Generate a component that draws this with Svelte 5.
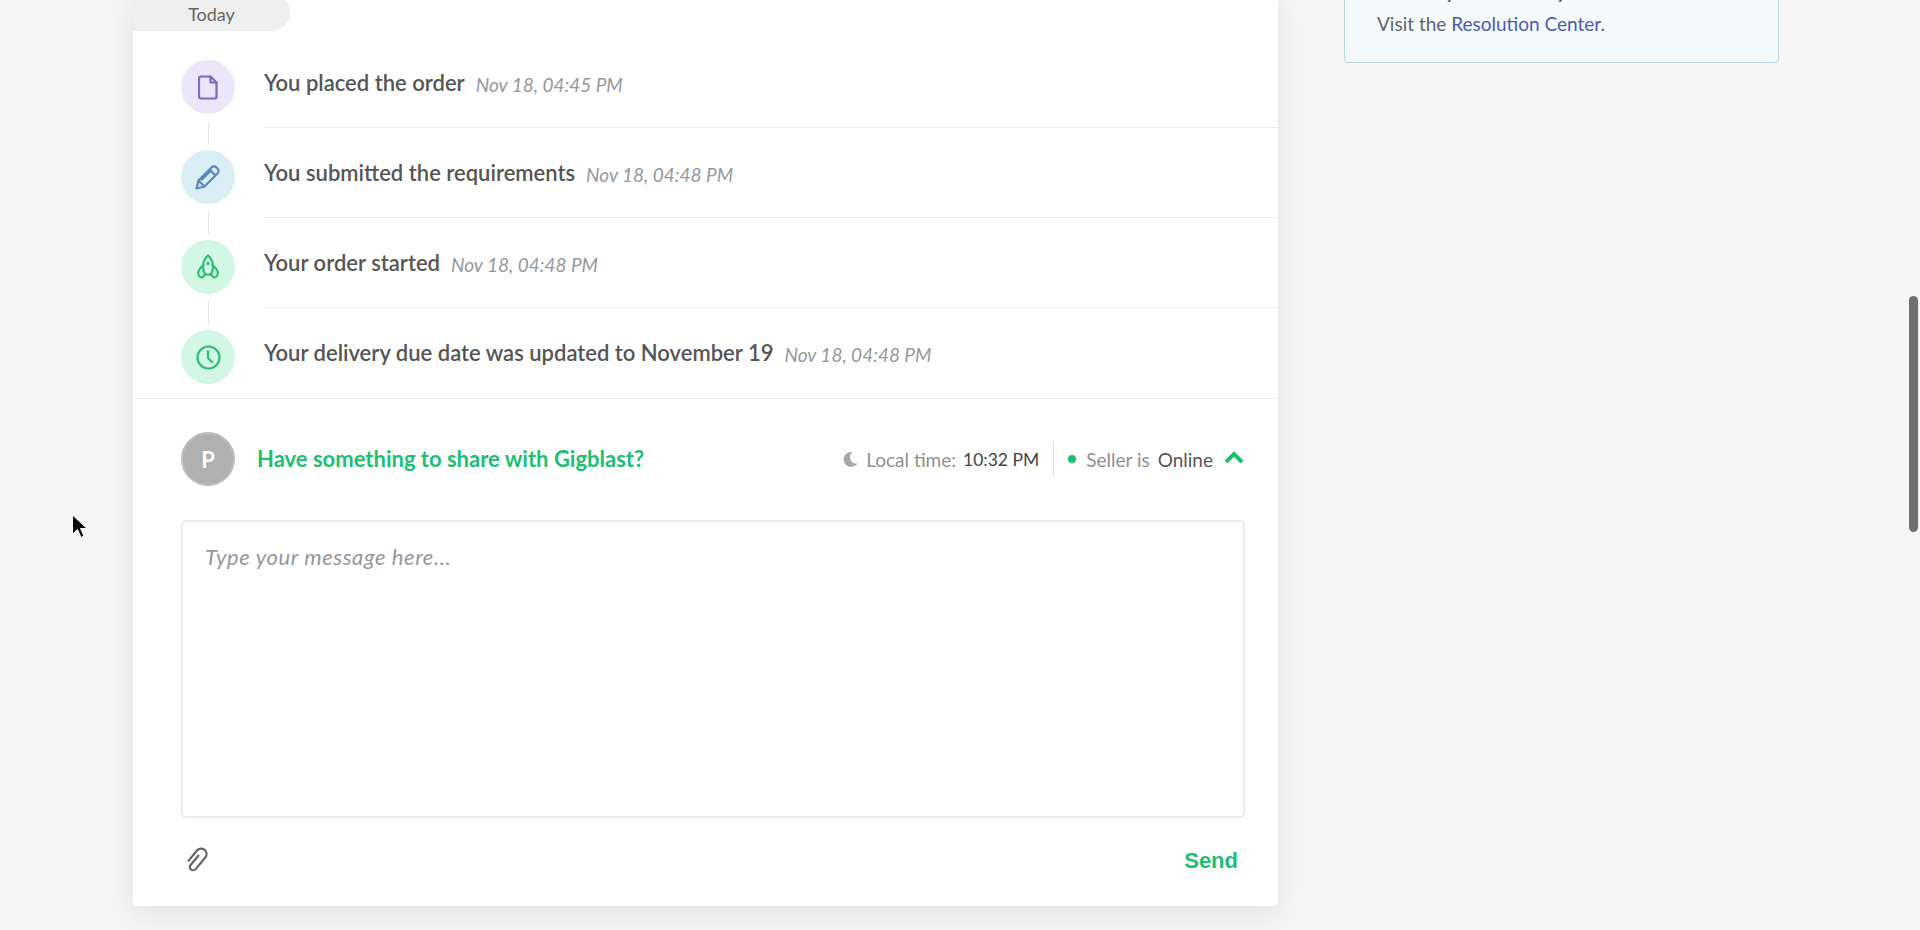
<script>
    const events = [
        { icon: 'file', tone: 'purple', text: 'You placed the order', date: 'Nov 18, 04:45 PM' },
        { icon: 'pencil', tone: 'blue', text: 'You submitted the requirements', date: 'Nov 18, 04:48 PM' },
        { icon: 'rocket', tone: 'green', text: 'Your order started', date: 'Nov 18, 04:48 PM' },
        { icon: 'clock', tone: 'green', text: 'Your delivery due date was updated to November 19', date: 'Nov 18, 04:48 PM' }
    ]
</script>

<div class="page">
    <div class="columns">
        <main class="card">
            <div class="day">Today</div>

            <ul class="events">
                {#each events as event}
                    <li class="event">
                        <span class="badge {event.tone}">
                            {#if event.icon === 'file'}
                                <svg width="20" height="25" viewBox="0 0 20 25">
                                    <path d="M3 1.500h9.500l6 6V21.500a2 2 0 0 1-2 2H3a2 2 0 0 1-2-2V3.500a2 2 0 0 1 2-2z" />
                                    <path d="M12.500 1.500v6h6" />
                                </svg>
                            {:else if event.icon === 'pencil'}
                                <svg width="26" height="26" viewBox="0 0 26 26">
                                    <path d="M1.500 24.500l2-8L16.500 3.500a3.500 3.500 0 0 1 5 0l1 1a3.500 3.500 0 0 1 0 5L9.500 22.500z" />
                                    <path d="M3.500 16.500l6 6M14.500 5.500l6 6M7 15.500l9-9" />
                                </svg>
                            {:else if event.icon === 'rocket'}
                                <svg width="24" height="26" viewBox="0 0 24 26">
                                    <path d="M12 1.500C8.500 4.500 7 8.500 7 12.500c0 3.200.8 5.800 2 8h6c1.200-2.200 2-4.800 2-8 0-4-1.500-8-5-11z" />
                                    <path d="M7.500 11C5 13.500 2 16 2.200 19c.1 2.500 1.800 4.500 3.300 4.500s2.500-2 3.500-3M16.500 11c2.500 2.500 5.500 5 5.300 8-.1 2.500-1.800 4.500-3.300 4.500s-2.500-2-3.500-3" />
                                    <circle class="dot" cx="12" cy="9.500" r="1.700" />
                                </svg>
                            {:else}
                                <svg width="25" height="25" viewBox="0 0 25 25">
                                    <circle cx="12.500" cy="12.500" r="11" />
                                    <path d="M12 6v7l4 4" />
                                </svg>
                            {/if}
                        </span>
                        <div class="event-body">
                            <strong>{event.text}</strong>
                            <em>{event.date}</em>
                        </div>
                    </li>
                {/each}
            </ul>

            <section class="composer">
                <div class="composer-head">
                    <span class="avatar">P</span>
                    <h2>Have something to share with Gigblast?</h2>
                    <div class="status">
                        <svg class="moon" width="15" height="16" viewBox="0 0 15 16">
                            <path d="M9.500 1A7.500 7.500 0 1 0 14.500 12.500 6.500 6.500 0 0 1 9.500 1z" />
                        </svg>
                        <span class="muted">Local time:</span>
                        <span class="time">10:32 PM</span>
                        <span class="sep"></span>
                        <span class="online-dot"></span>
                        <span class="muted">Seller is</span>
                        <span class="online">Online</span>
                        <svg class="chevron" width="20" height="13" viewBox="0 0 20 13">
                            <path d="M2 11l8-8 8 8" />
                        </svg>
                    </div>
                </div>

                <div class="message">Type your message here...</div>

                <div class="composer-foot">
                    <svg class="clip" width="24" height="26" viewBox="0 0 16 24">
                        <path d="M7 8v12a3 3 0 0 0 6 0V6a5 5 0 0 0-10 0v13" transform="rotate(40 8 12)" />
                    </svg>
                    <button class="send">Send</button>
                </div>
            </section>
        </main>

        <aside class="help">
            <p class="help-title">Have any issues with your order?</p>
            <p>Visit the <a href="./">Resolution Center</a>.</p>
        </aside>
    </div>

    <div class="thumb"></div>

    <svg class="cursor" width="18" height="26" viewBox="0 0 18 26">
        <path d="M1.500 1v19l5-4.500 3.500 8 3-1.500-3.500-7.500H16z" />
    </svg>
</div>

<style>
    :global(body) {
        background: #f5f5f5;
        overflow: hidden;
    }

    .page {
        height: 930px;
        overflow: hidden;
        position: relative;
        font-family: Lato, "Liberation Sans", sans-serif;
        color: #555;
    }

    .columns {
        display: flex;
        align-items: flex-start;
        gap: 66px;
        margin-top: -56px;
        padding-left: 133px;
    }

    .card {
        width: 1145px;
        margin-top: 50px;
        background: #fff;
        border-radius: 0 0 4px 4px;
        box-shadow: 0 8px 30px rgba(0, 0, 0, .08);
    }

    .day {
        width: 157px;
        height: 37px;
        line-height: 40px;
        text-align: center;
        font-size: 18px;
        color: #666;
        background: #efefef;
        border-radius: 0 18px 18px 0;
    }

    .events {
        list-style: none;
        margin: 0;
        padding: 7px 0 0;
    }

    .event {
        display: flex;
        gap: 29px;
        padding-left: 48px;
        height: 90px;
        position: relative;
    }

    .event:not(:last-child) .badge::after {
        content: "";
        position: absolute;
        left: 27px;
        top: 62px;
        width: 1px;
        height: 22px;
        background: #e8e8e8;
    }

    .badge {
        flex: none;
        width: 54px;
        height: 54px;
        margin-top: 22px;
        border-radius: 50%;
        display: flex;
        align-items: center;
        justify-content: center;
        position: relative;
    }

    .badge svg {
        fill: none;
        stroke-width: 2.200;
        stroke-linejoin: round;
        stroke-linecap: round;
        stroke: currentColor;
    }

    .badge .dot {
        fill: currentColor;
        stroke: none;
    }

    .purple {
        background: #ebe6fa;
        color: #7c68c2;
    }

    .blue {
        background: #d9eef5;
        color: #5b86c4;
    }

    .green {
        background: #d2f7e5;
        color: #2dbe72;
    }

    .event-body {
        flex: 1;
        display: flex;
        align-items: baseline;
        gap: 11px;
        padding-top: 31px;
        border-bottom: 1px solid #ececec;
    }

    .event:last-child .event-body {
        border-bottom: 0;
    }

    .event-body strong {
        font-size: 22px;
        line-height: 28px;
        font-weight: 600;
        color: #555;
    }

    .event-body em {
        font-size: 19px;
        color: #95979d;
        transform: translateY(1px);
    }

    .composer {
        border-top: 1px solid #ececec;
        padding: 33px 33px 0 48px;
    }

    .composer-head {
        display: flex;
        align-items: center;
        height: 54px;
    }

    .avatar {
        flex: none;
        width: 54px;
        height: 54px;
        box-sizing: border-box;
        border: 2px solid #bdbdbd;
        border-radius: 50%;
        background: #b0b0b0;
        color: #fff;
        font-size: 22px;
        font-weight: 700;
        display: flex;
        align-items: center;
        justify-content: center;
    }

    h2 {
        margin: -1px 0 0 22px;
        font-size: 22px;
        font-weight: 700;
        color: #1dbf73;
    }

    .status {
        margin-left: auto;
        display: flex;
        align-items: center;
        font-size: 19px;
    }

    .muted {
        color: #8f8f8f;
    }

    .moon {
        fill: #a8a8a8;
        margin: -1px 8px 0 0;
    }

    .time {
        margin-left: 7px;
        font-size: 17.500px;
        color: #444;
    }

    .sep {
        width: 1px;
        height: 35px;
        margin: 0 14px;
        background: #e2e2e2;
    }

    .online-dot {
        width: 8px;
        height: 8px;
        margin-right: 10px;
        border-radius: 50%;
        background: #1dbf73;
    }

    .online {
        margin-left: 8px;
        color: #555;
    }

    .chevron {
        margin: -4px 1px 0 11px;
        fill: none;
        stroke: #1dbf73;
        stroke-width: 4;
    }

    .message {
        margin-top: 34px;
        padding: 22px 22px 0;
        height: 272px;
        border: 2px solid #ececec;
        border-radius: 5px;
        font-size: 22px;
        line-height: 26px;
        letter-spacing: .6px;
        font-style: italic;
        color: #95979d;
    }

    .composer-foot {
        box-sizing: border-box;
        display: flex;
        justify-content: space-between;
        align-items: flex-start;
        height: 88px;
        padding: 28px 7px 0 4px;
    }

    .clip {
        fill: none;
        stroke: #62646a;
        stroke-width: 2;
    }

    .send {
        margin-top: 2px;
        padding: 0;
        border: 0;
        background: none;
        font-family: "Liberation Sans", sans-serif;
        font-size: 22px;
        font-weight: 700;
        color: #1dbf73;
    }

    .help {
        width: 435px;
        box-sizing: border-box;
        padding: 33px 32px 25px;
        background: #f5fafd;
        border: 1px solid #b8d8e4;
        border-radius: 4px;
        font-size: 19px;
        line-height: 27px;
        color: #62646a;
    }

    .help p {
        margin: 0;
    }

    .help-title {
        margin-bottom: 5px !important;
        font-weight: 700;
    }

    .help a {
        color: #4a5ab5;
        text-decoration: none;
    }

    .thumb {
        position: absolute;
        left: 1909px;
        top: 296px;
        width: 9px;
        height: 236px;
        border-radius: 5px;
        background: #6f6f6f;
    }

    .cursor {
        position: absolute;
        left: 71px;
        top: 514px;
        fill: #000;
        stroke: #fff;
        stroke-width: 1;
    }
</style>
